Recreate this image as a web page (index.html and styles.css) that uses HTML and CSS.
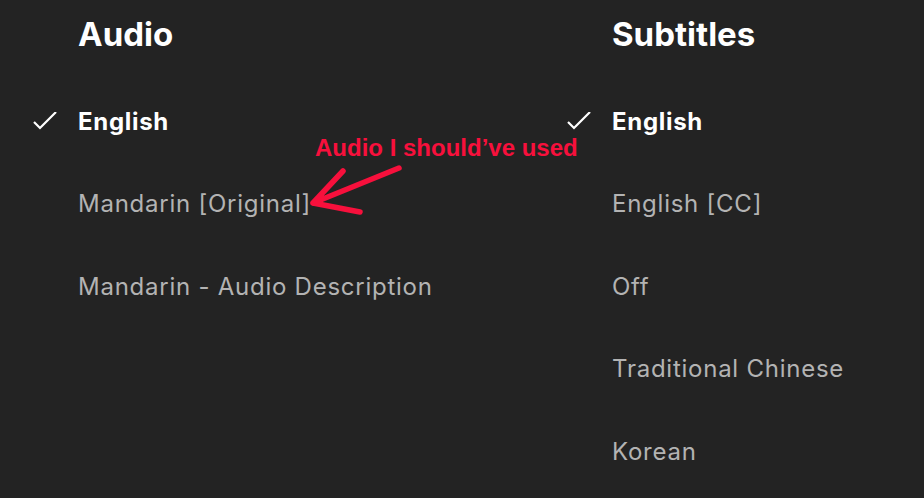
FILE: index.html
```html
<!DOCTYPE html>
<html lang="en">
<head>
<meta charset="utf-8">
<title>Audio &amp; Subtitles</title>
<link rel="stylesheet" href="styles.css">
</head>
<body>
<main class="panel">
  <section class="column">
    <h2 class="heading">Audio</h2>
    <ul class="list">
      <li class="item selected">
        <span class="check"><svg viewBox="0 0 24 24" width="24" height="24"><path d="M1 10 L7 16 L23 0" fill="none" stroke="#fff" stroke-width="2.2"/></svg></span>
        <span class="label">English</span>
      </li>
      <li class="item"><span class="check"></span><span class="label">Mandarin [Original]</span></li>
      <li class="item"><span class="check"></span><span class="label">Mandarin - Audio Description</span></li>
    </ul>
  </section>
  <section class="column last">
    <h2 class="heading">Subtitles</h2>
    <ul class="list">
      <li class="item selected">
        <span class="check"><svg viewBox="0 0 24 24" width="24" height="24"><path d="M1 10 L7 16 L23 0" fill="none" stroke="#fff" stroke-width="2.2"/></svg></span>
        <span class="label">English</span>
      </li>
      <li class="item"><span class="check"></span><span class="label">English [CC]</span></li>
      <li class="item"><span class="check"></span><span class="label">Off</span></li>
      <li class="item"><span class="check"></span><span class="label">Traditional Chinese</span></li>
      <li class="item"><span class="check"></span><span class="label">Korean</span></li>
    </ul>
  </section>
  <div class="note">Audio I should’ve used</div>
  <svg class="arrow" viewBox="0 0 120 70" width="120" height="70">
    <path d="M98 8 L12 43 M12 43 L42 11 M12 43 L59 52" fill="none" stroke="#f7103c" stroke-width="5.5" stroke-linecap="round" stroke-linejoin="round"/>
  </svg>
</main>
</body>
</html>
```

FILE: styles.css
```css
html, body {
  margin: 0;
  padding: 0;
  background: #232323;
}
body {
  width: 924px;
  height: 498px;
  overflow: hidden;
  font-family: Inter, "Noto Sans", sans-serif;
}
.panel {
  position: relative;
  display: flex;
  padding-left: 28px;
  height: 498px;
  box-sizing: border-box;
  overflow: hidden;
}
.column {
  width: 534px;
  flex: none;
}
.column.last {
  width: auto;
  flex: 1;
  min-width: 0;
}
.heading {
  margin: 0;
  padding: 14px 0 0 50px;
  font-size: 33px;
  line-height: 40px;
  font-weight: 700;
  color: #fff;
}
.list {
  list-style: none;
  margin: 27px 0 0 0;
  padding: 0;
}
.item {
  display: flex;
  align-items: center;
  height: 82.4px;
  font-size: 24px;
  line-height: 82.4px;
  letter-spacing: 0.75px;
  color: #b3b3b3;
  white-space: nowrap;
}
.item.selected {
  color: #fff;
  font-weight: 700;
  letter-spacing: 0.7px;
}
.check {
  width: 50px;
  flex: none;
  display: flex;
  align-items: center;
  padding-left: 5px;
  box-sizing: border-box;
}
.check svg {
  display: block;
  margin-top: 3px;
}
.note {
  position: absolute;
  left: 315px;
  top: 133px;
  font-family: "Liberation Sans", Arial, sans-serif;
  font-weight: 700;
  font-size: 24px;
  line-height: 30px;
  color: #f7103c;
  white-space: nowrap;
}
.arrow {
  position: absolute;
  left: 301px;
  top: 160px;
}
```
